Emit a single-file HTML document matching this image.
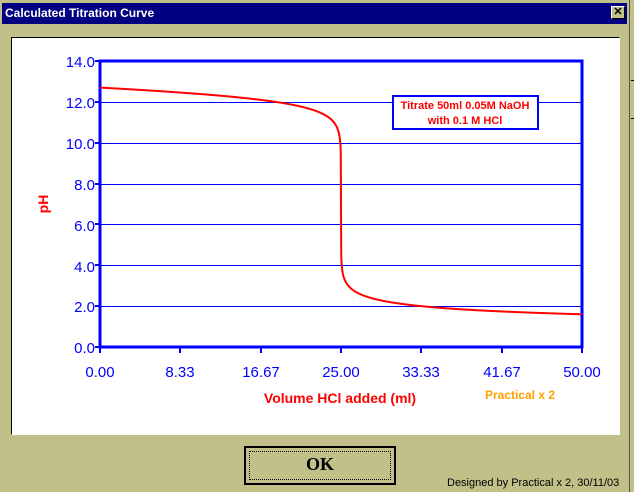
<!DOCTYPE html>
<html><head><style>
body{margin:0;width:634px;height:492px;background:#c0c088;position:relative;overflow:hidden;font-family:"Liberation Sans",sans-serif}
.title{position:absolute;left:2px;top:3px;width:625px;height:21px;background:#000080;color:#fff;font-weight:bold;font-size:12px;line-height:21px;padding-left:3px;box-sizing:border-box}
.close{position:absolute;left:611px;top:6px;width:14px;height:13px;background:#c0c088;border:1px solid;border-color:#fff #000 #000 #fff;box-sizing:border-box;font-size:11px;line-height:11px;text-align:center;color:#000;font-weight:bold}
.panel{position:absolute;left:11px;top:37px;width:609px;height:398px;background:#fff;border:1px solid;border-color:#000 #fff #fff #000;box-sizing:border-box}
.ok{position:absolute;left:244px;top:446px;width:152px;height:39px;border:2px solid #000;box-sizing:border-box;background:#c0c088;font-family:"Liberation Serif",serif;font-weight:bold;font-size:18px;text-align:center;line-height:33px}
.ok i{position:absolute;left:3px;top:3px;right:3px;bottom:3px;border:1px dotted #000}
.des{position:absolute;left:447px;top:477px;font-size:11px;color:#000}
.rs{position:absolute;left:629px;top:0;width:1px;height:492px;background:#555}
</style></head><body>
<div class="title">Calculated Titration Curve</div>
<div class="close">✕</div>
<div class="rs"></div>
<div style="position:absolute;left:631px;top:80px;width:3px;height:1px;background:#000"></div>
<div style="position:absolute;left:631px;top:118px;width:3px;height:1px;background:#000"></div>
<div class="panel"></div>
<svg style="position:absolute;left:0;top:0" width="634" height="492" font-family="Liberation Sans, sans-serif">
<g id="grid" stroke="#0000ff" stroke-width="1" shape-rendering="crispEdges"></g>
<rect x="100" y="61" width="482" height="286" fill="none" stroke="#0000ff" stroke-width="3" shape-rendering="crispEdges"/>
<g fill="#0000ff" font-size="15" text-anchor="end">
<text x="95" y="67">14.0</text><text x="95" y="108">12.0</text><text x="95" y="149">10.0</text><text x="95" y="190">8.0</text><text x="95" y="231">6.0</text><text x="95" y="272">4.0</text><text x="95" y="312">2.0</text><text x="95" y="353">0.0</text>
</g>
<g fill="#0000ff" font-size="15" text-anchor="middle">
<text x="100" y="377">0.00</text><text x="180" y="377">8.33</text><text x="261" y="377">16.67</text><text x="341" y="377">25.00</text><text x="421" y="377">33.33</text><text x="502" y="377">41.67</text><text x="582" y="377">50.00</text>
</g>
<text x="340" y="403" fill="#ff0000" font-size="14" font-weight="bold" text-anchor="middle">Volume HCl added (ml)</text>
<text x="520" y="399" fill="#ffa000" font-size="12" font-weight="bold" text-anchor="middle">Practical x 2</text>
<text transform="translate(48,204) rotate(-90)" fill="#ff0000" font-size="14" font-weight="bold" text-anchor="middle">pH</text>
<path id="curve" fill="none" stroke="#ff0000" stroke-width="2"/>
<rect x="393" y="96" width="145" height="33" fill="#fff" stroke="#0000ff" stroke-width="2"/>
<text x="465" y="109" fill="#ff0000" font-size="11" font-weight="bold" text-anchor="middle">Titrate 50ml 0.05M NaOH</text>
<text x="465" y="124" fill="#ff0000" font-size="11" font-weight="bold" text-anchor="middle">with 0.1 M HCl</text>
</svg>
<div class="ok"><i></i>OK</div>
<div class="des">Designed by Practical x 2, 30/11/03</div>
<script>
var g=document.getElementById('grid'),s='';
for(var k=1;k<7;k++){var y=Math.round(347-k*286/14*2)+0.5;s+='<line x1="95" x2="582" y1="'+y+'" y2="'+y+'"/>';}
for(var k=0;k<8;k++){var y=Math.round(347-k*286/14*2);s+='<line x1="95" x2="100" y1="'+y+'" y2="'+y+'" stroke-width="2"/>';}
for(var k=0;k<7;k++){var x=Math.round(100+k*482/6);s+='<line x1="'+x+'" x2="'+x+'" y1="347" y2="353" stroke-width="2"/>';}
g.innerHTML=s;
var d='';
for(var i=0;i<=2000;i++){var V=i*50/2000;var n=0.1*V-2.5,tot=50+V,pH;
var w=1e-14,h;var a=n/tot;
if(n>0)h=(a+Math.sqrt(a*a+4*w))/2; else h=w/((-a+Math.sqrt(a*a+4*w))/2);
pH=-Math.log10(h);
var x=100+V/50*482,y=347-pH/14*286;d+=(i?'L':'M')+x.toFixed(2)+' '+y.toFixed(2);}
document.getElementById('curve').setAttribute('d',d);
</script>
</body></html>
